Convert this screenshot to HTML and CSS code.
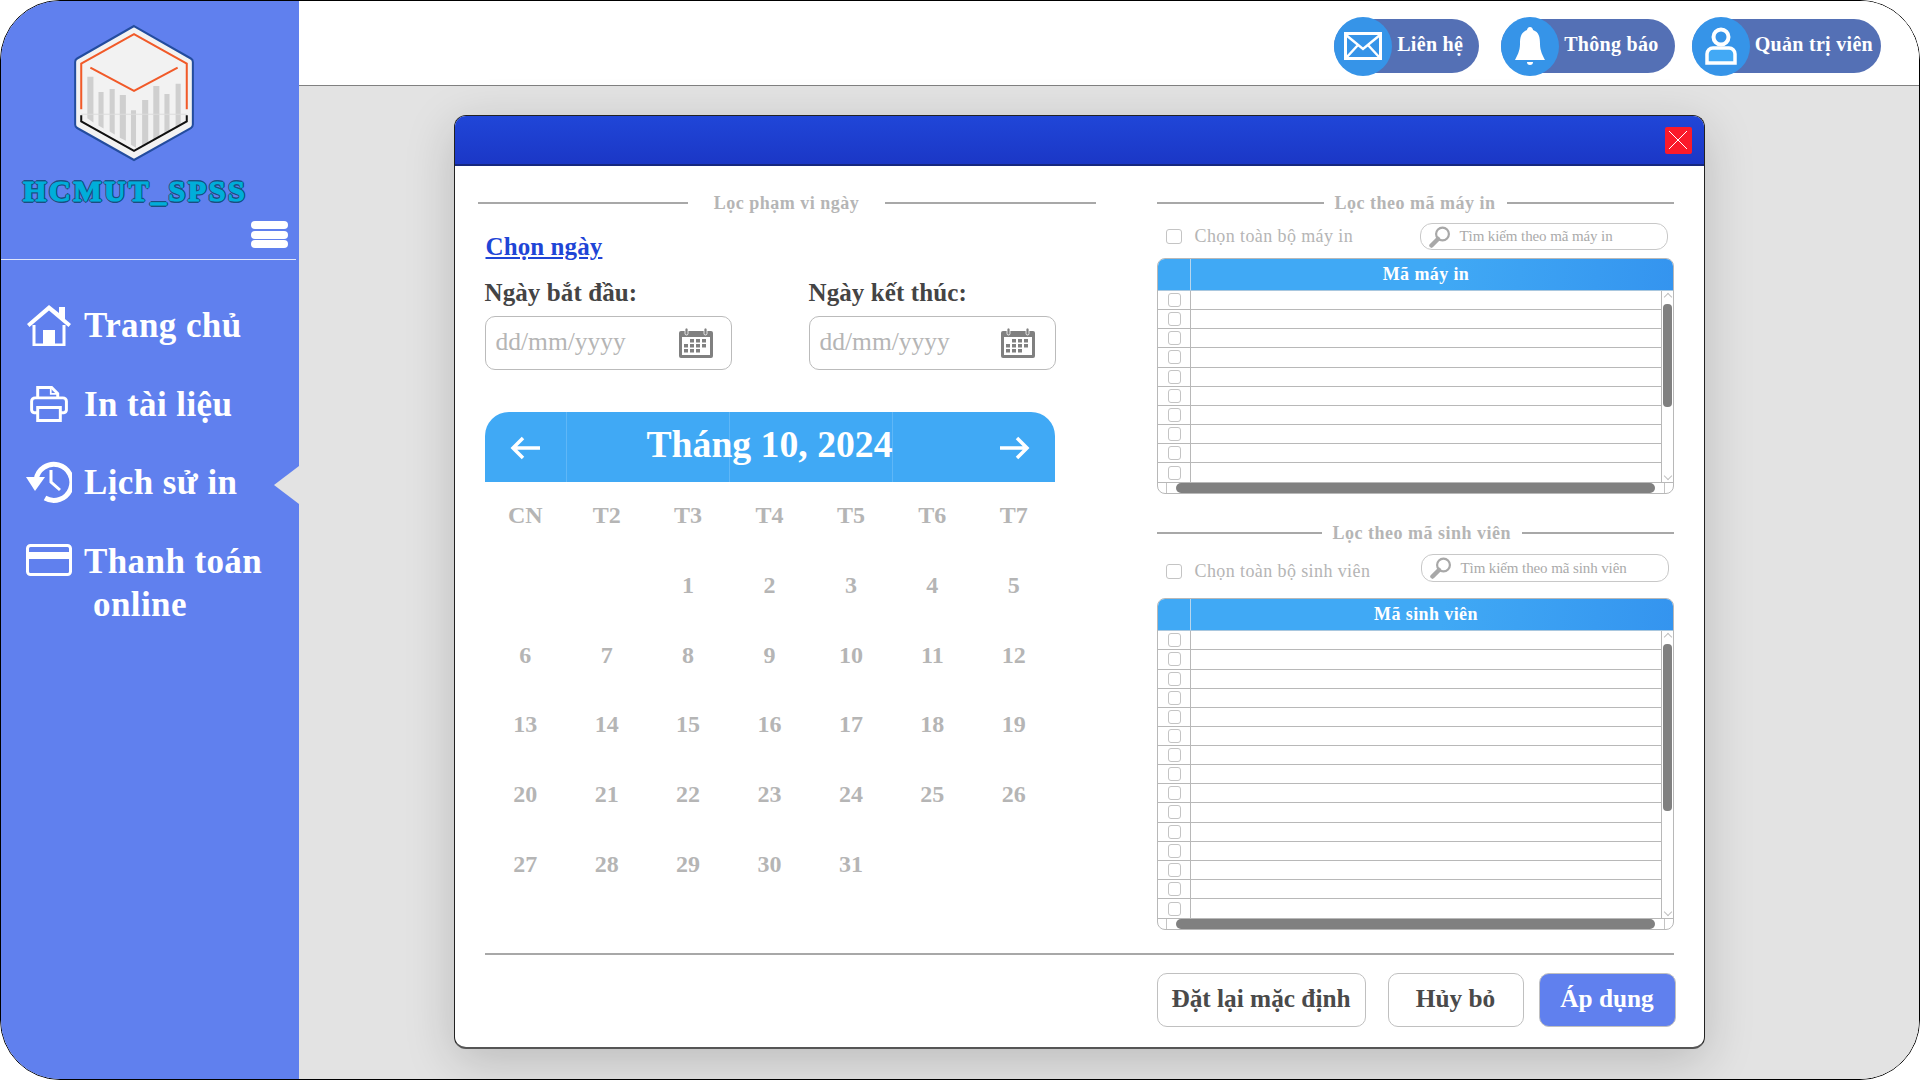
FILE: index.html
```html
<!DOCTYPE html>
<html lang="vi">
<head>
<meta charset="UTF-8" />
<title>HCMUT_SPSS - Lịch sử in</title>
<link rel="stylesheet" href="styles.css">
</head>
<body>
<svg class="defs" width="0" height="0">
  <symbol id="cal" viewBox="0 0 34 30">
    <rect x="0" y="3" width="34" height="27" rx="2" fill="#808080"/>
    <rect x="6" y="0" width="3" height="7" rx="1.5" fill="#808080" stroke="#fff" stroke-width=".8"/>
    <rect x="25" y="0" width="3" height="7" rx="1.5" fill="#808080" stroke="#fff" stroke-width=".8"/>
    <rect x="3" y="9" width="28" height="18" fill="#fff"/>
    <g fill="#808080">
      <rect x="11" y="11" width="4" height="3.5"/><rect x="17" y="11" width="4" height="3.5"/><rect x="23" y="11" width="4" height="3.5"/>
      <rect x="5" y="16" width="4" height="3.5"/><rect x="11" y="16" width="4" height="3.5"/><rect x="17" y="16" width="4" height="3.5"/><rect x="23" y="16" width="4" height="3.5"/>
      <rect x="5" y="21" width="4" height="3.5"/><rect x="11" y="21" width="4" height="3.5"/><rect x="17" y="21" width="4" height="3.5"/>
    </g>
  </symbol>
  <symbol id="lens" viewBox="0 0 22 22">
    <circle cx="13.5" cy="8" r="6.4" fill="none" stroke="#a8a8a8" stroke-width="2.2"/>
    <path d="M9 13 2.5 19.5" stroke="#a8a8a8" stroke-width="4.5" stroke-linecap="round"/>
  </symbol>
</svg>

<div class="app">
  <aside class="sidebar">
    <div class="brand">
      <svg class="logo" viewBox="0 0 120 136">
        <path d="M60 2 116 34a4 4 0 0 1 2 3.500V99a4 4 0 0 1-2 3.500L60 134 4 102.500A4 4 0 0 1 2 99V37.500A4 4 0 0 1 4 34Z" fill="#f2f2f2" stroke="#234c9e" stroke-width="2"/>
        <g fill="#cfcfcf">
          <polygon points="14,52 20,52 20,97 14,93"/>
          <polygon points="25,67 30,67 30,103 25,100"/>
          <polygon points="36,64 41,64 41,109 36,106"/>
          <polygon points="46,70 52,70 52,115 46,112"/>
          <polygon points="57,85 62,85 62,122 57,119"/>
          <polygon points="68,75 74,75 74,117 68,120"/>
          <polygon points="79,61 85,61 85,111 79,114"/>
          <polygon points="90,69 95,69 95,105 90,108"/>
          <polygon points="101,59 106,59 106,100 101,103"/>
        </g>
        <path d="M8 89H112" stroke="#dcdcdc" stroke-width="1"/>
        <path d="M8 84V39L60 10l52 29v45" fill="none" stroke="#f15a29" stroke-width="2"/>
        <path d="M17 43 60 66 103 43" fill="none" stroke="#f15a29" stroke-width="2"/>
        <path d="M8 90V96L60 125 112 96V90" fill="none" stroke="#111" stroke-width="2"/>
      </svg>
      <div class="brand-name">HCMUT_SPSS</div>
      <div class="burger"><span></span><span></span><span></span></div>
    </div>

    <nav class="menu">
      <a class="menu-item" href="#">
        <svg class="menu-icon" viewBox="0 0 46 42" fill="#fff">
          <path d="M23 1 33 9V3h6v12l6 5-2.500 3L23 6.500 3.500 23 1 20Z"/>
          <path d="M8 21v20h30V21" fill="none" stroke="#fff" stroke-width="3"/>
          <rect x="17" y="26" width="12" height="14"/>
        </svg>
        <span>Trang chủ</span>
      </a>
      <a class="menu-item" href="#">
        <svg class="menu-icon" viewBox="0 0 46 42" fill="none" stroke="#fff" stroke-width="3.400">
          <g transform="translate(3 2.700) scale(.87)">
            <path d="M10 14V2H26L33 9V14"/>
            <path d="M25 2V9.500H33" stroke-width="2"/>
            <path d="M10 31H6A3.500 3.500 0 0 1 3 28V18A4 4 0 0 1 7 14H39A4 4 0 0 1 43 18V28A3.500 3.500 0 0 1 40 31H36"/>
            <path d="M10 25H36V40H10Z"/>
          </g>
        </svg>
        <span>In tài liệu</span>
      </a>
      <a class="menu-item active" href="#">
        <svg class="menu-icon" viewBox="0 0 46 42" fill="none" stroke="#fff">
          <path d="M10 19A18 18 0 1 1 19 37" stroke-width="5"/>
          <path d="M0 16H19L9 30Z" fill="#fff" stroke="none"/>
          <path d="M25 9V21L34 29" stroke-width="3"/>
        </svg>
        <span>Lịch sử in</span>
      </a>
      <a class="menu-item menu-item-two" href="#">
        <svg class="menu-icon" viewBox="0 0 46 42" fill="none" stroke="#fff" stroke-width="3">
          <rect x="1.500" y="5.500" width="43" height="29" rx="3"/>
          <rect x="1.500" y="12" width="43" height="7" fill="#fff" stroke="none"/>
        </svg>
        <span>Thanh toán<br><em>online</em></span>
      </a>
    </nav>
    <div class="pointer"></div>
  </aside>

  <div class="main">
    <header class="topbar">
      <a class="pill pill-contact" href="#">
        <span class="pill-icon">
          <svg width="38" height="28" viewBox="0 0 38 28">
            <rect x="1.500" y="1.500" width="35" height="25" fill="none" stroke="#fff" stroke-width="3"/>
            <path d="M2 3 19 17 36 3M2 26 14 13M36 26 24 13" fill="none" stroke="#fff" stroke-width="2.500"/>
          </svg>
        </span>
        <span class="pill-label">Liên hệ</span>
      </a>
      <a class="pill" href="#">
        <span class="pill-icon">
          <svg width="32" height="38" viewBox="0 0 32 38" fill="#fff">
            <path d="M16 0C18 0 19 2 19 3 25 5 26 10 26 17 26 24 29 29 31 33H1C3 29 6 24 6 17 6 10 7 5 13 3 13 2 14 0 16 0Z"/>
            <path d="M13 35H19A3 3 0 0 1 13 35Z"/>
          </svg>
        </span>
        <span class="pill-label">Thông báo</span>
      </a>
      <a class="pill pill-user" href="#">
        <span class="pill-icon">
          <svg width="32" height="38" viewBox="0 0 32 38">
            <circle cx="16" cy="10" r="7.500" fill="none" stroke="#fff" stroke-width="4"/>
            <path d="M2 36V27A6 6 0 0 1 8 21H24A6 6 0 0 1 30 27V36Z" fill="#42a9f5" stroke="#fff" stroke-width="3.500"/>
          </svg>
        </span>
        <span class="pill-label">Quản trị viên</span>
      </a>
    </header>

    <div class="content">
      <section class="modal">
        <div class="modal-bar">
          <button class="close-btn">
            <svg width="20" height="20" viewBox="0 0 20 20"><path d="M1 1 19 19M19 1 1 19" stroke="#fff" stroke-width="1"/></svg>
          </button>
        </div>

        <div class="modal-body">
          <div class="col-date">
            <div class="legend legend-date"><span>Lọc phạm vi ngày</span></div>
            <a class="pick-link" href="#">Chọn ngày</a>
            <div class="date-fields">
              <div class="date-field">
                <label>Ngày bắt đầu:</label>
                <div class="date-input"><span>dd/mm/yyyy</span><svg width="34" height="30"><use href="#cal"/></svg></div>
              </div>
              <div class="date-field">
                <label>Ngày kết thúc:</label>
                <div class="date-input"><span>dd/mm/yyyy</span><svg width="34" height="30"><use href="#cal"/></svg></div>
              </div>
            </div>

            <div class="cal-head">
              <div class="cal-cell">
                <svg width="32" height="26" viewBox="0 0 32 26"><path d="M30 13H3M13 3 3 13 13 23" fill="none" stroke="#fff" stroke-width="3.500"/></svg>
              </div>
              <div class="cal-cell cal-line"></div>
              <div class="cal-cell cal-line"></div>
              <div class="cal-cell cal-line cal-next">
                <svg width="32" height="26" viewBox="0 0 32 26"><path d="M2 13H29M19 3 29 13 19 23" fill="none" stroke="#fff" stroke-width="3.500"/></svg>
              </div>
              <div class="cal-title">Tháng 10, 2024</div>
            </div>
            <div class="cal-grid">
              <div>CN</div><div>T2</div><div>T3</div><div>T4</div><div>T5</div><div>T6</div><div>T7</div>
              <div></div><div></div><div>1</div><div>2</div><div>3</div><div>4</div><div>5</div>
              <div>6</div><div>7</div><div>8</div><div>9</div><div>10</div><div>11</div><div>12</div>
              <div>13</div><div>14</div><div>15</div><div>16</div><div>17</div><div>18</div><div>19</div>
              <div>20</div><div>21</div><div>22</div><div>23</div><div>24</div><div>25</div><div>26</div>
              <div>27</div><div>28</div><div>29</div><div>30</div><div>31</div><div></div><div></div>
            </div>
          </div>

          <div class="col-filter">
            <div class="legend"><span>Lọc theo mã máy in</span></div>
            <div class="filter-row">
              <div class="select-all"><i class="check"></i>Chọn toàn bộ máy in</div>
              <div class="search"><svg width="22" height="22"><use href="#lens"/></svg><span>Tìm kiếm theo mã máy in</span></div>
            </div>
            <div class="list">
              <div class="list-head"><div class="list-head-check"></div><div class="list-head-title">Mã máy in</div></div>
              <div class="list-body">
                <div class="list-rows">
                  <div class="list-row"><i class="check"></i></div>
                  <div class="list-row"><i class="check"></i></div>
                  <div class="list-row"><i class="check"></i></div>
                  <div class="list-row"><i class="check"></i></div>
                  <div class="list-row"><i class="check"></i></div>
                  <div class="list-row"><i class="check"></i></div>
                  <div class="list-row"><i class="check"></i></div>
                  <div class="list-row"><i class="check"></i></div>
                  <div class="list-row"><i class="check"></i></div>
                  <div class="list-row"><i class="check"></i></div>
                </div>
                <div class="vscroll"><b class="thumb-v thumb-short"></b></div>
              </div>
              <div class="hscroll"><b class="thumb-h"></b></div>
            </div>

            <div class="legend legend-second"><span>Lọc theo mã sinh viên</span></div>
            <div class="filter-row filter-row-second">
              <div class="select-all"><i class="check"></i>Chọn toàn bộ sinh viên</div>
              <div class="search"><svg width="22" height="22"><use href="#lens"/></svg><span>Tìm kiếm theo mã sinh viên</span></div>
            </div>
            <div class="list">
              <div class="list-head"><div class="list-head-check"></div><div class="list-head-title">Mã sinh viên</div></div>
              <div class="list-body">
                <div class="list-rows">
                  <div class="list-row"><i class="check"></i></div>
                  <div class="list-row"><i class="check"></i></div>
                  <div class="list-row"><i class="check"></i></div>
                  <div class="list-row"><i class="check"></i></div>
                  <div class="list-row"><i class="check"></i></div>
                  <div class="list-row"><i class="check"></i></div>
                  <div class="list-row"><i class="check"></i></div>
                  <div class="list-row"><i class="check"></i></div>
                  <div class="list-row"><i class="check"></i></div>
                  <div class="list-row"><i class="check"></i></div>
                  <div class="list-row"><i class="check"></i></div>
                  <div class="list-row"><i class="check"></i></div>
                  <div class="list-row"><i class="check"></i></div>
                  <div class="list-row"><i class="check"></i></div>
                  <div class="list-row"><i class="check"></i></div>
                </div>
                <div class="vscroll"><b class="thumb-v thumb-long"></b></div>
              </div>
              <div class="hscroll"><b class="thumb-h"></b></div>
            </div>
          </div>
        </div>

        <div class="modal-foot">
          <button class="btn">Đặt lại mặc định</button>
          <button class="btn btn-cancel">Hủy bỏ</button>
          <button class="btn btn-apply">Áp dụng</button>
        </div>
      </section>
    </div>
  </div>
</div>
</body>
</html>
```

FILE: styles.css
```css
:root {
  --side: #6080ee;
  --sky: #40a9f5;
  --navy: #1f45d6;
  --muted: #b5b5b5;
  --line: #b8b8b8;
}

* { box-sizing: border-box; }

html, body {
  margin: 0;
  height: 100%;
  background: #fff;
  font-family: "Liberation Serif", serif;
  overflow: hidden;
}

.defs { position: absolute; }

.app {
  display: flex;
  width: 1920px;
  height: 1080px;
  border: 1.5px solid #000;
  border-radius: 60px;
  overflow: hidden;
}

/* sidebar */
.sidebar {
  position: relative;
  flex: 0 0 297.5px;
  background: var(--side);
  color: #fff;
}

.brand {
  display: flex;
  flex-direction: column;
  align-items: flex-start;
  height: 259px;
  margin-right: 3px;
  border-bottom: 1px solid #dfe5fb;
}

.logo {
  width: 122px;
  height: 138px;
  margin: 23px 0 0 72px;
}

.brand-name {
  margin: 14px 0 0 22px;
  font-size: 30px;
  line-height: 30px;
  font-weight: bold;
  letter-spacing: 2.600px;
  color: #00aeda;
  -webkit-text-stroke: 1.2px #00aeda;
  text-shadow: 1.7px 0 #1a4f80, -1.7px 0 #1a4f80, 0 1.7px #1a4f80, 0 -1.7px #1a4f80, 1.2px 1.2px #1a4f80, -1.2px -1.2px #1a4f80, 1.2px -1.2px #1a4f80, -1.2px 1.2px #1a4f80;
}

.burger {
  display: flex;
  flex-direction: column;
  gap: 1.500px;
  width: 37px;
  margin: 15px 0 0 250px;
}

.burger span {
  height: 8px;
  border-radius: 4px;
  background: #fff;
}

.menu {
  display: flex;
  flex-direction: column;
  padding: 44px 0 0 25px;
}

.menu-item {
  display: flex;
  align-items: flex-start;
  height: 78.500px;
  color: #fff;
  text-decoration: none;
  font-size: 35px;
  line-height: 43px;
  font-weight: bold;
  letter-spacing: .4px;
}

.menu-icon {
  flex: none;
  width: 46px;
  height: 42px;
  margin-right: 12px;
}

.menu-item em {
  font-style: normal;
  padding-left: 9px;
}

.pointer {
  position: absolute;
  top: 465px;
  right: 0;
  border-style: solid;
  border-width: 19px 25px 19px 0;
  border-color: transparent #e3e3e3 transparent transparent;
}

/* top bar */
.main {
  flex: 1;
  display: flex;
  flex-direction: column;
  background: #e3e3e3;
}

.topbar {
  display: flex;
  justify-content: flex-end;
  align-items: center;
  gap: 17px;
  flex: 0 0 85px;
  padding: 6px 38px 0 0;
  background: #fff;
  border-bottom: 1px solid #808080;
}

.pill {
  display: flex;
  align-items: center;
  height: 54px;
  padding-right: 16px;
  border-radius: 27px;
  background: #5470b5;
  color: #fff;
  text-decoration: none;
  font-size: 20px;
  font-weight: bold;
  letter-spacing: .3px;
}

.pill-contact { margin-right: 5px; }
.pill-user { padding-right: 8px; }
.pill-label { margin-top: -3px; }

.pill-icon {
  display: flex;
  justify-content: center;
  align-items: center;
  width: 58px;
  height: 59px;
  margin: -3px 5px -3px 0;
  border-radius: 50%;
  background: #3694e8;
}

/* modal */
.content { flex: 1; }

.modal {
  display: flex;
  flex-direction: column;
  width: 1251px;
  height: 934px;
  margin: 29px 0 0 155px;
  background: #fff;
  border: 1px solid #222;
  border-bottom: 2px solid #555;
  border-radius: 12px;
  box-shadow: 0 12px 50px rgba(0, 0, 0, .18);
}

.modal-bar {
  display: flex;
  justify-content: flex-end;
  align-items: center;
  flex: 0 0 50px;
  padding-right: 12px;
  background: linear-gradient(#2046d8, #1b37c6);
  border-bottom: 2px solid #16287f;
  border-radius: 11px 11px 0 0;
}

.close-btn {
  display: flex;
  justify-content: center;
  align-items: center;
  width: 27px;
  height: 27px;
  padding: 0;
  border: none;
  border-radius: 2px;
  background: #fb1a2a;
}

.modal-body {
  display: flex;
  flex: 1;
  padding: 27px 30px 0 23px;
}

.legend {
  display: flex;
  align-items: center;
  height: 20px;
  font-size: 18px;
  font-weight: bold;
  letter-spacing: .5px;
  color: var(--muted);
}

.legend::before,
.legend::after {
  content: '';
  flex: 1;
  height: 2px;
  background: #a8a8a8;
}

.legend span { padding: 0 11px; }

.legend-second { margin-top: 29px; }
.legend-second::before { flex: 0 0 165px; }

/* left column */
.col-date {
  flex: 0 0 618px;
  margin-right: 61px;
}

.legend-date span { padding: 0 26px; }

.pick-link {
  display: block;
  margin: 19px 0 0 8px;
  font-size: 25px;
  line-height: 30px;
  font-weight: bold;
  letter-spacing: .1px;
  color: var(--navy);
}

.date-fields {
  display: flex;
  gap: 77px;
  margin: 16px 0 0 7px;
}

.date-field {
  width: 247px;
}

.date-field label {
  display: block;
  font-size: 25px;
  line-height: 30px;
  font-weight: bold;
  letter-spacing: .1px;
  color: #444;
}

.date-input {
  display: flex;
  justify-content: space-between;
  align-items: center;
  height: 54px;
  margin-top: 8px;
  padding: 0 18px 0 10px;
  border: 1.500px solid #bbb;
  border-radius: 10px;
  font-size: 25.500px;
  color: var(--muted);
}

.date-field + .date-field .date-input { padding-right: 20px; }

.date-input span { margin-top: -3px; }

.cal-head {
  position: relative;
  display: grid;
  grid-template-columns: 1fr 2fr 2fr 2fr;
  width: 570px;
  height: 70px;
  margin: 42px 0 0 7px;
  border-radius: 24px 24px 0 0;
  background: var(--sky);
  overflow: hidden;
}

.cal-cell {
  display: flex;
  justify-content: center;
  align-items: center;
  padding: 2px 0 0 2px;
}

.cal-line { border-left: 1px solid #5fb7f7; }

.cal-next {
  justify-content: flex-end;
  padding-right: 25px;
}

.cal-title {
  position: absolute;
  left: 0;
  right: 0;
  top: 7px;
  text-align: center;
  font-size: 37.700px;
  line-height: 50px;
  font-weight: bold;
  color: #fff;
}

.cal-grid {
  display: grid;
  grid-template-columns: repeat(7, 1fr);
  grid-auto-rows: 69.700px;
  width: 570px;
  margin: -1px 0 0 7px;
  align-items: center;
  text-align: center;
  font-size: 24px;
  font-weight: bold;
  color: var(--muted);
}

/* right column */
.col-filter {
  flex: 1;
}

.filter-row {
  display: flex;
  justify-content: space-between;
  align-items: center;
  height: 27px;
  margin-top: 10px;
  padding: 0 6px 0 9px;
}

.filter-row-second {
  height: 28px;
  margin-top: 11px;
  padding-right: 5px;
}

.filter-row-second .select-all { margin-top: 6px; }

.select-all {
  display: flex;
  align-items: center;
  gap: 13px;
  font-size: 18px;
  letter-spacing: .4px;
  color: var(--muted);
}

.select-all .check {
  width: 16px;
  height: 15px;
}

.check {
  display: block;
  width: 13px;
  height: 14px;
  border: 1.500px solid #c4c4c4;
  border-radius: 3px;
}

.search {
  display: flex;
  align-items: center;
  gap: 9px;
  width: 248px;
  height: 100%;
  padding-left: 8px;
  border: 1.500px solid #c8c8c8;
  border-radius: 12px;
  font-size: 15px;
  letter-spacing: -.1px;
  color: #aaa;
}

.list {
  display: flex;
  flex-direction: column;
  margin-top: 8px;
  border: 1px solid var(--line);
  border-radius: 8px;
  overflow: hidden;
}

.filter-row-second + .list { margin-top: 16px; }

.list-head {
  display: flex;
  height: 32px;
  background: linear-gradient(100deg, #40a9f5 55%, #3494ef);
  border-bottom: 1px solid #a9c7de;
}

.list-head-check {
  flex: 0 0 33px;
  border-right: 1px solid #b7d6ee;
}

.list-head-title {
  flex: 1;
  padding: 0 11px 5px 0;
  text-align: center;
  font-size: 18px;
  line-height: 31px;
  font-weight: bold;
  letter-spacing: .4px;
  color: #fff;
}

.list-body {
  display: flex;
  border-bottom: 1px solid var(--line);
}

.list-rows {
  flex: 1;
  border-right: 1px solid var(--line);
}

.list-row {
  position: relative;
  display: flex;
  align-items: center;
  height: 19.130px;
  padding-left: 10px;
  border-bottom: 1px solid var(--line);
}

.list-row:last-child { border-bottom: none; }

.list-row::after {
  content: '';
  position: absolute;
  left: 32px;
  top: 0;
  bottom: -1px;
  width: 1px;
  background: var(--line);
}

.vscroll {
  position: relative;
  flex: 0 0 11px;
  background: #fff;
}

.vscroll::before,
.vscroll::after {
  content: '';
  position: absolute;
  left: 3px;
  width: 5px;
  height: 5px;
  border: solid #c0c0c0;
  border-width: 1px 0 0 1px;
  transform: rotate(45deg);
}

.vscroll::before { top: 3px; }
.vscroll::after { bottom: 3px; transform: rotate(225deg); }

.thumb-v {
  position: absolute;
  top: 13px;
  left: 1px;
  width: 9px;
  border-radius: 4px;
  background: #808080;
}

.thumb-short { height: 103px; }
.thumb-long { height: 167px; }

.hscroll {
  position: relative;
  height: 10px;
}

.hscroll::before,
.hscroll::after {
  content: '';
  position: absolute;
  top: 0;
  width: 8px;
  height: 10px;
  border-right: 1px solid #c4c4c4;
}

.hscroll::before { left: 0; }
.hscroll::after { right: 0; border-right: none; border-left: 1px solid #c4c4c4; }

.thumb-h {
  position: absolute;
  top: 0;
  left: 18px;
  width: 479px;
  height: 10px;
  border-radius: 5px;
  background: #808080;
}

/* footer */
.modal-foot {
  display: flex;
  justify-content: flex-end;
  gap: 15px;
  margin: 0 30px 20px 30px;
  padding-top: 18px;
  border-top: 2px solid #a8a8a8;
}

.btn {
  width: 209px;
  height: 54px;
  padding: 0 0 3px;
  background: #fff;
  border: 1.500px solid #c0c0c0;
  border-radius: 10px;
  font-family: "Liberation Serif", serif;
  font-size: 25.300px;
  font-weight: bold;
  color: #4a4a4a;
}

.btn:first-child { margin-right: 7px; }
.btn-cancel { width: 136px; }

.btn-apply {
  width: 137px;
  margin-right: -2px;
  background: var(--side);
  color: #fff;
}
```
